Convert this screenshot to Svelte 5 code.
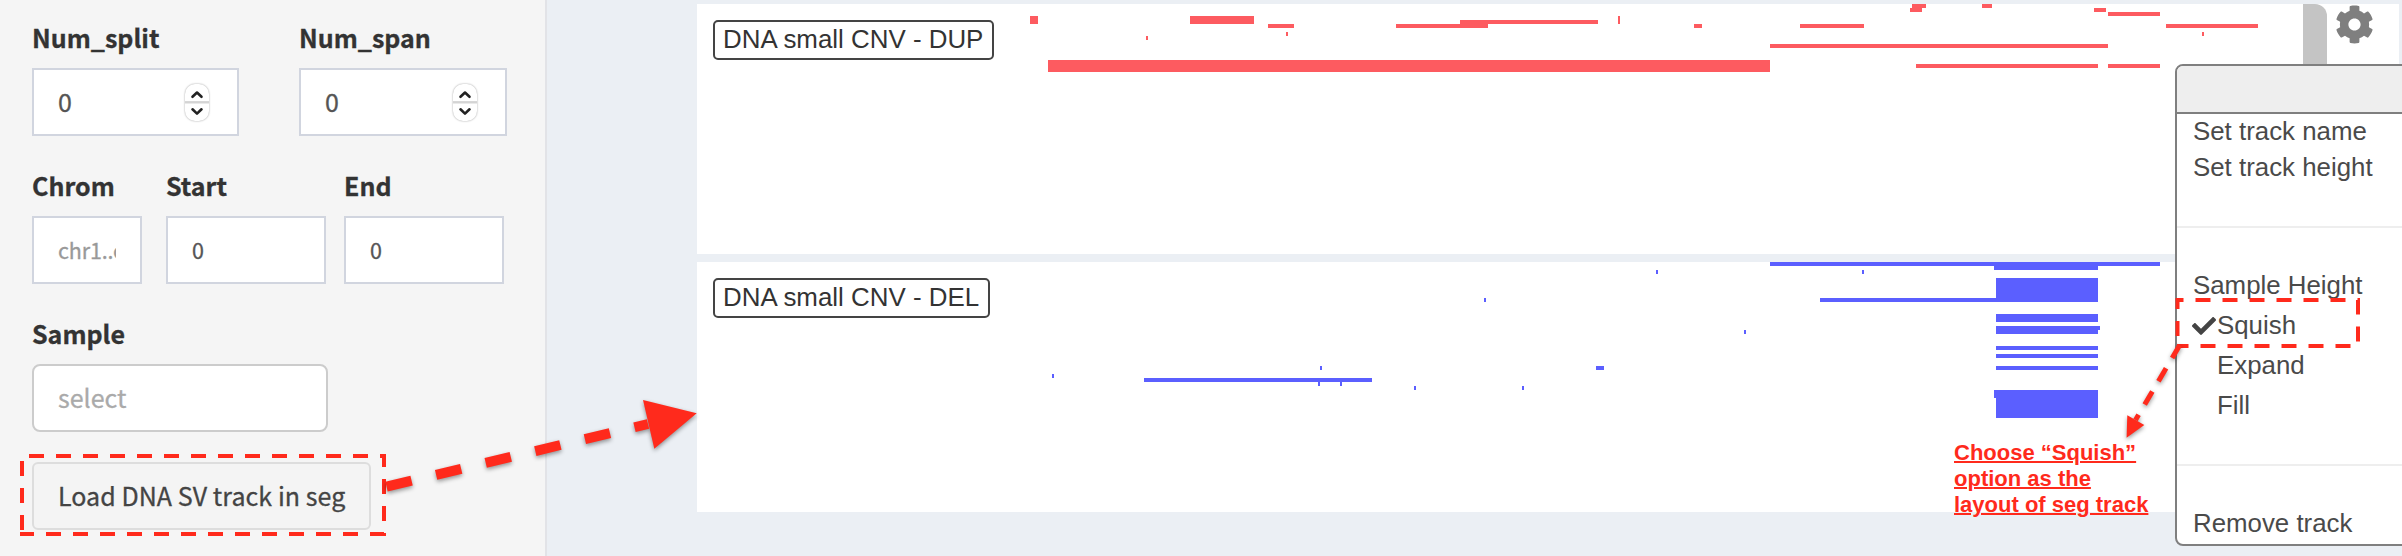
<script>
  const dup = [
    [1030, 16, 8, 8], [1190, 16, 64, 8], [1268, 24, 26, 4], [1146, 36, 2, 4],
    [1286, 32, 2, 4], [1396, 24, 92, 4], [1460, 20, 138, 4], [1048, 60, 722, 12],
    [1618, 16, 2, 8], [1694, 24, 8, 4], [1800, 24, 64, 4], [1912, 4, 14, 4],
    [1910, 8, 12, 4], [1982, 4, 10, 4], [2094, 8, 12, 4], [2108, 12, 52, 4],
    [2166, 24, 92, 4], [1770, 44, 338, 4], [1916, 64, 182, 4], [2108, 64, 52, 4],
    [2202, 32, 2, 4]
  ];
  const del = [
    [1770, 262, 390, 4], [1994, 266, 104, 4], [1862, 270, 2, 4], [1996, 278, 102, 24],
    [1820, 298, 176, 4], [1996, 314, 102, 8], [1996, 326, 102, 8], [2098, 326, 2, 4],
    [1744, 330, 2, 4], [1996, 346, 102, 4], [1996, 354, 102, 4], [1996, 366, 102, 4],
    [1996, 390, 102, 28], [1994, 390, 2, 8], [1052, 374, 2, 4], [1144, 378, 228, 4],
    [1320, 366, 2, 4], [1318, 382, 2, 4], [1340, 382, 2, 4], [1414, 386, 2, 4],
    [1522, 386, 2, 4], [1484, 298, 2, 4], [1656, 270, 2, 4], [1596, 366, 8, 4]
  ];
  const tracks = [
    { name: 'DNA small CNV - DUP', top: 4, color: '#fd5b60', segs: dup },
    { name: 'DNA small CNV - DEL', top: 262, color: '#5b5fff', segs: del }
  ];
</script>

<div class="app">
  <aside class="sidebar">
    <div class="row nums">
      {#each ['Num_split', 'Num_span'] as name}
        <div class="field">
          <div class="label">{name}</div>
          <div class="box num">
            <span>0</span>
            <span class="spinner">
              <svg width="24" height="37" viewBox="0 0 24 37" fill="none" stroke="#222" stroke-width="2.6" stroke-linecap="round" stroke-linejoin="round">
                <path d="M0 18.3H24" stroke="#d4d4d4" stroke-width="2.4" stroke-linecap="butt" />
                <path d="M7.5 12.8L12 8.500L16.500 12.800M7.500 25.300L12 29.600L16.500 25.300" />
              </svg>
            </span>
          </div>
        </div>
      {/each}
    </div>
    <div class="row region">
      <div class="field chrom">
        <div class="label">Chrom</div>
        <div class="box small"><span class="clip">chr1..c</span></div>
      </div>
      <div class="field start">
        <div class="label">Start</div>
        <div class="box small">0</div>
      </div>
      <div class="field end">
        <div class="label">End</div>
        <div class="box small">0</div>
      </div>
    </div>
    <div class="field sample">
      <div class="label">Sample</div>
      <div class="box select">select</div>
    </div>
    <button class="load">Load DNA SV track in seg</button>
  </aside>

  <main class="browser">
    {#each tracks as t}
      <section class="track">
        <svg class="segs" width="1702" height="250" viewBox="697 {t.top} 1702 250" fill={t.color} shape-rendering="crispEdges">
          {#each t.segs as [x, y, w, h]}
            <rect {x} {y} width={w} height={h} />
          {/each}
        </svg>
        <div class="name">{t.name}</div>
      </section>
    {/each}
  </main>

  <div class="scrollbar"></div>
  <svg class="gear" width="39" height="39" viewBox="0 0 512 512" fill="#7f7f7f">
    <path d="M487.4 315.7l-42.6-24.6c4.3-23.2 4.3-47 0-70.2l42.6-24.6c4.9-2.8 7.1-8.6 5.5-14-11.1-35.6-30-67.8-54.7-94.6-3.8-4.1-10-5.1-14.8-2.3L380.8 110c-17.9-15.4-38.5-27.3-60.8-35.1V25.8c0-5.6-3.9-10.5-9.4-11.7-36.7-8.2-74.3-7.8-109.2 0-5.5 1.2-9.4 6.1-9.4 11.7V75c-22.2 7.9-42.8 19.8-60.8 35.1L88.7 85.5c-4.9-2.8-11-1.9-14.8 2.3-24.7 26.7-43.6 58.9-54.7 94.6-1.7 5.4.6 11.2 5.5 14L67.3 221c-4.3 23.2-4.3 47 0 70.2l-42.6 24.6c-4.9 2.8-7.1 8.6-5.5 14 11.1 35.6 30 67.8 54.7 94.6 3.8 4.1 10 5.1 14.8 2.3l42.6-24.6c17.9 15.4 38.5 27.3 60.8 35.1v49.2c0 5.6 3.9 10.5 9.4 11.7 36.7 8.2 74.3 7.8 109.2 0 5.5-1.2 9.4-6.1 9.4-11.7v-49.2c22.2-7.9 42.8-19.8 60.8-35.1l42.6 24.6c4.9 2.8 11 1.9 14.8-2.3 24.7-26.7 43.6-58.9 54.7-94.6 1.5-5.5-.7-11.3-5.6-14.1zM256 336c-44.1 0-80-35.9-80-80s35.9-80 80-80 80 35.9 80 80-35.9 80-80 80z" />
  </svg>

  <div class="menu">
    <div class="menu-head"></div>
    <div class="item">Set track name</div>
    <div class="item">Set track height</div>
    <div class="rule first"></div>
    <div class="item heading">Sample Height</div>
    <div class="option">
      <svg width="24" height="24" viewBox="0 0 512 512" fill="#444">
        <path d="M173.898 439.404l-166.4-166.4c-9.997-9.997-9.997-26.206 0-36.204l36.203-36.204c9.997-9.998 26.207-9.998 36.204 0L192 312.69 432.095 72.596c9.997-9.997 26.207-9.997 36.204 0l36.203 36.204c9.997 9.997 9.997 26.206 0 36.204l-294.4 294.401c-9.998 9.997-26.207 9.997-36.204-.001z" />
      </svg>
      <span>Squish</span>
    </div>
    <div class="option"><i></i><span>Expand</span></div>
    <div class="option"><i></i><span>Fill</span></div>
    <div class="rule second"></div>
    <div class="item">Remove track</div>
  </div>

  <div class="note">
    <div>Choose “Squish”</div>
    <div>option as the</div>
    <div>layout of seg track</div>
  </div>

  <svg class="marks" width="2402" height="556" viewBox="0 0 2402 556" fill="none" stroke="#ff2a1c">
    <path d="M22 530V456H384V534H20" stroke-width="4" stroke-dasharray="15 12" />
    <path d="M2177.500 336V300H2358V346H2177" stroke-width="4" stroke-dasharray="15 12" />
    <g class="arrow">
      <path d="M386.500 486.700L648 424" stroke-width="10" stroke-dasharray="25.800 25.200" />
      <path d="M643 400L696.700 413.300L654.300 448.700Z" fill="#ff2a1c" stroke="none" />
    </g>
    <g class="arrow">
      <path d="M2179.800 345L2135.500 420" stroke-width="5" stroke-dasharray="15 12" />
      <path d="M2127.300 415.300L2144.300 425L2126.600 437.700Z" fill="#ff2a1c" stroke="none" />
    </g>
  </svg>
</div>

<style>
  :global(body) { margin: 0; overflow: hidden; }
  .app {
    position: relative;
    display: flex;
    width: 2402px;
    height: 556px;
    overflow: hidden;
    background: #ebeff4;
    font-family: "Liberation Sans", Arial, sans-serif;
  }
  .sidebar {
    box-sizing: border-box;
    width: 547px;
    padding: 18px 0 0 32px;
    background: #f5f5f5;
    border-right: 2px solid #e2e3e7;
    font-family: "Noto Sans CJK SC", sans-serif;
    font-size: 25px;
    color: #444;
    -webkit-text-stroke: 0.3px;
  }
  .row { display: flex; height: 118px; margin-bottom: 30px; }
  .nums { gap: 60px; }
  .nums .field { width: 207px; }
  .nums .field + .field { width: 208px; }
  .label { height: 50px; line-height: 38px; font-weight: 700; color: #333; white-space: nowrap; }
  .box {
    box-sizing: border-box;
    height: 68px;
    padding: 0 24px;
    border: 2px solid #d1d5df;
    background: #fff;
    line-height: 63px;
    color: #555;
  }
  .num { display: flex; justify-content: space-between; align-items: flex-start; padding-right: 28px; }
  .spinner {
    width: 24px;
    height: 37px;
    margin-top: 14px;
    border-radius: 10px;
    line-height: 0;
    box-shadow: 0 0 2px rgba(0, 0, 0, 0.4);
  }
  .chrom { width: 110px; margin-right: 24px; }
  .start { width: 160px; margin-right: 18px; }
  .end { width: 160px; }
  .small { font-size: 21.500px; line-height: 64px; }
  .clip { display: block; overflow: hidden; white-space: nowrap; letter-spacing: -0.15px; color: #999; }
  .sample { height: 118px; margin-bottom: 30px; }
  .select { width: 296px; border-color: #ccc; border-radius: 8px; color: #aaa; }
  .load {
    display: block;
    box-sizing: border-box;
    width: 339px;
    height: 68px;
    padding: 0 0 2px 24px;
    border: 2px solid #ddd;
    border-radius: 6px;
    background: #f4f4f4;
    font: inherit;
    line-height: 62px;
    letter-spacing: 0.06px;
    color: #444;
    text-align: left;
    white-space: nowrap;
  }
  .browser { display: flex; flex-direction: column; gap: 8px; padding: 4px 0 0 150px; }
  .track { display: grid; width: 1702px; height: 250px; background: #fff; }
  .segs, .name { grid-area: 1 / 1; }
  .name {
    box-sizing: border-box;
    justify-self: start;
    height: 40px;
    margin: 16px 0 0 16px;
    padding: 0 9px 0 8px;
    border: 2px solid #444;
    border-radius: 5px;
    background: #fff;
    font-size: 25.900px;
    line-height: 34px;
    color: #333;
    white-space: nowrap;
  }
  .scrollbar {
    position: absolute;
    left: 2303px;
    top: 4px;
    width: 24px;
    height: 100px;
    border-top-right-radius: 12px;
    background: #c4c4c4;
  }
  .gear { position: absolute; left: 2334.500px; top: 4.500px; }
  .menu {
    position: absolute;
    box-sizing: border-box;
    left: 2175px;
    top: 64px;
    width: 300px;
    height: 482px;
    border: 2px solid #7f7f7f;
    border-radius: 8px;
    overflow: hidden;
    background: #fff;
    font-size: 25.850px;
    color: #4a4a4a;
    white-space: nowrap;
  }
  .menu-head { height: 46px; background: #eee; border-bottom: 2px solid #7f7f7f; }
  .item { height: 36px; padding-left: 16px; line-height: 34px; }
  .rule { height: 2px; background: #eee; }
  .first { margin: 40px 0 38px; }
  .heading { height: 40px; line-height: 38px; margin-bottom: 0; }
  .option { display: flex; align-items: center; height: 40px; padding-left: 15px; line-height: 38px; }
  .option span { height: 40px; }
  .option svg, .option i { width: 24px; flex: none; margin-right: 1px; }
  .second { margin: 38px 0 40px; }
  .note {
    position: absolute;
    left: 1954px;
    top: 440px;
    font-size: 22px;
    font-weight: 700;
    line-height: 26px;
    color: #ff2a1c;
    text-decoration: underline;
    text-decoration-thickness: 2px;
    white-space: nowrap;
  }
  .marks { position: absolute; left: 0; top: 0; }
  .arrow { filter: drop-shadow(0 2px 2px rgba(0, 0, 0, 0.4)); }
</style>
